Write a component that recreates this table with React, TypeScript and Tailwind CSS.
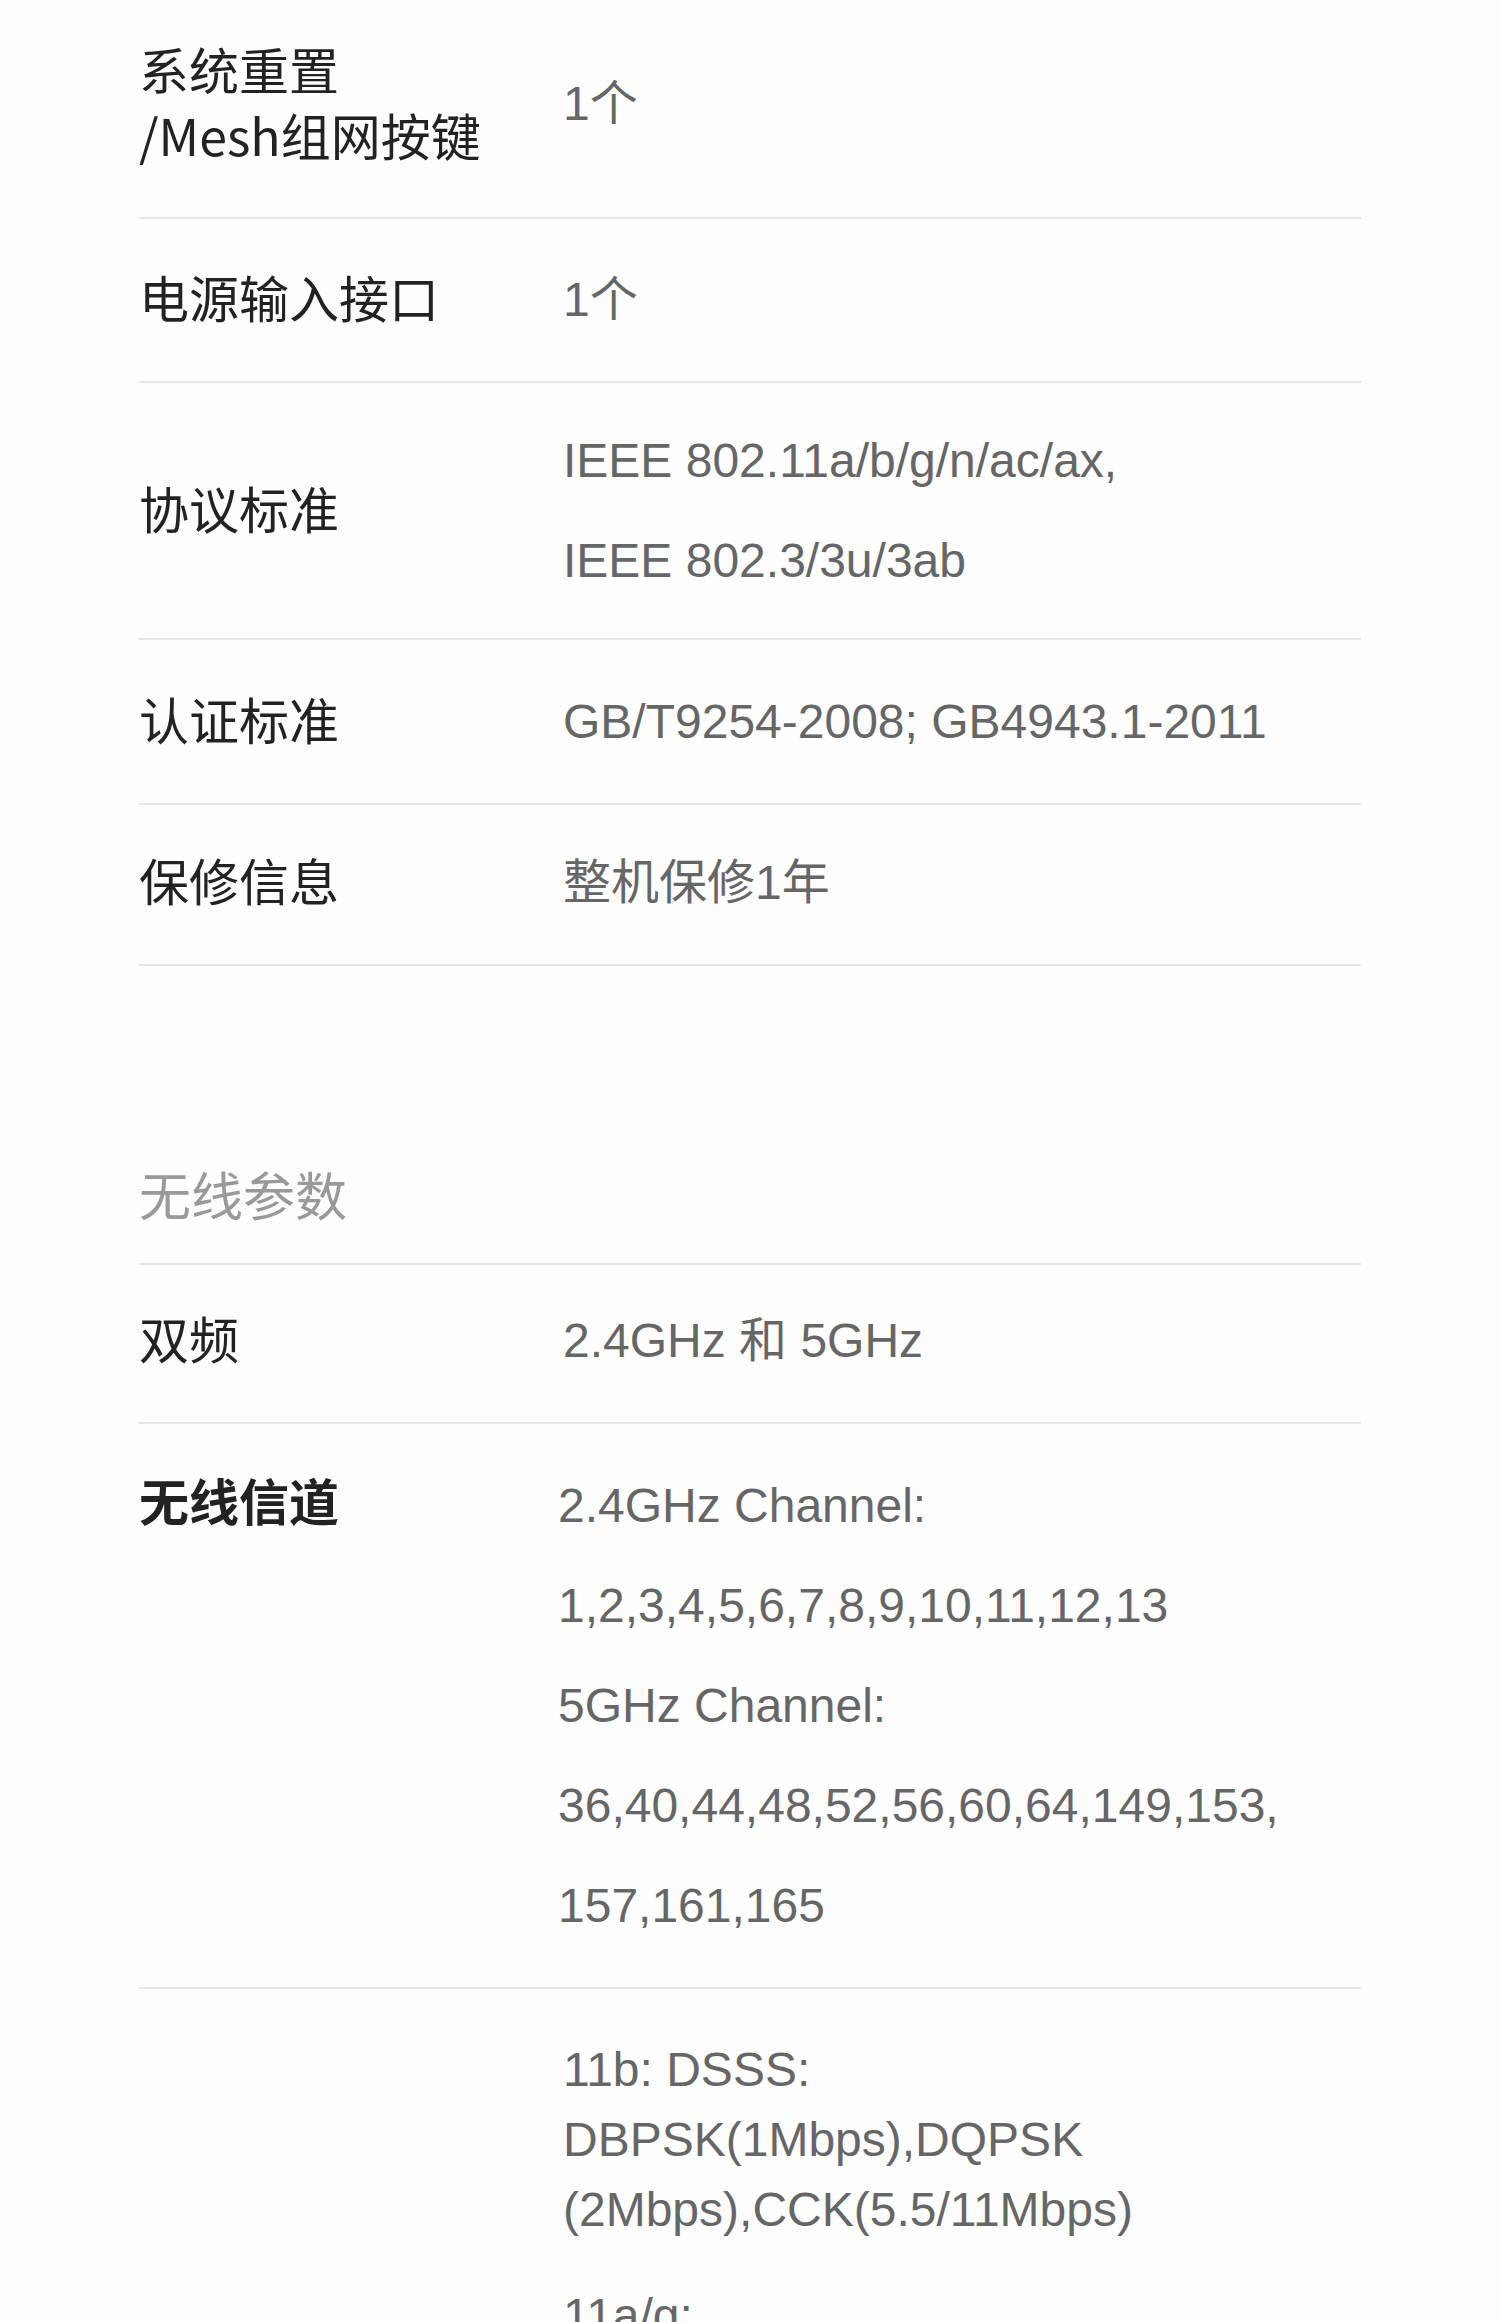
import { ReactNode } from "react";

const font = { fontFamily: '"Liberation Sans", "Noto Sans CJK SC", sans-serif' };
const cjk = { fontFamily: '"Noto Sans CJK SC", "Liberation Sans", sans-serif' };

interface RowProps {
    label: ReactNode
    children: ReactNode
    pad: string
    top?: boolean
    labelClass?: string
    valueClass?: string
}

function Row({ label, children, pad, top = false, labelClass = "leading-[66px] -mt-[8px]", valueClass = "leading-[100px]" }: RowProps) {
    return <div className={`flex ${top ? "items-start" : "items-center"} border-b-2 border-[#e6e6e6] ${pad}`}>
        <div className={`w-[424px] shrink-0 text-[50px] text-[#222] ${labelClass}`} style={cjk}>{label}</div>
        <div className={`flex-1 text-[48px] text-[#666] ${valueClass}`}>{children}</div>
    </div>
}

export default function App() {
    return <div className="h-[2322px] w-full overflow-hidden bg-[#fdfdfd]" style={font}>
        <div className="px-[139px]">
            {/* 接口 */}
            <Row pad="pt-[41px] pb-[50px]" labelClass="leading-[66px] -mt-[6px]" label={<>系统重置<br />/Mesh组网按键</>}>1个</Row>
            <Row pad="pt-[31px] pb-[31px]" label="电源输入接口">1个</Row>
            <Row pad="pt-[28px] pb-[27px]" label="协议标准">
                <div>IEEE 802.11a/b/g/n/ac/ax,</div>
                <div>IEEE 802.3/3u/3ab</div>
            </Row>
            <Row pad="pt-[32px] pb-[31px]" label="认证标准">GB/T9254-2008; GB4943.1-2011</Row>
            <Row pad="pt-[28px] pb-[31px]" label="保修信息">整机保修1年</Row>

            {/* 无线参数 */}
            <div className="border-b-2 border-[#e6e6e6] pt-[195px] pb-[36px] text-[52px] leading-[66px] text-[#999]" style={cjk}>无线参数</div>
            <Row pad="pt-[26px] pb-[31px]" label="双频">2.4GHz 和 5GHz</Row>
            <Row pad="pt-[32px] pb-[31px]" top label="无线信道" labelClass="font-semibold leading-[86px]" valueClass="leading-[100px] -ml-[5px]">
                <div>2.4GHz Channel:</div>
                <div>1,2,3,4,5,6,7,8,9,10,11,12,13</div>
                <div>5GHz Channel:</div>
                <div>36,40,44,48,52,56,60,64,149,153,</div>
                <div>157,161,165</div>
            </Row>
            <Row pad="pt-[46px] pb-[40px]" top label="" valueClass="leading-[70px]">
                <div>
                    <div>11b: DSSS:</div>
                    <div>DBPSK(1Mbps),DQPSK</div>
                    <div>(2Mbps),CCK(5.5/11Mbps)</div>
                </div>
                <div className="mt-[36px]">
                    <div>11a/g:</div>
                    <div>OFDM: BPSK, QPSK, 16QAM, 64QAM</div>
                </div>
            </Row>
        </div>
    </div>
}
